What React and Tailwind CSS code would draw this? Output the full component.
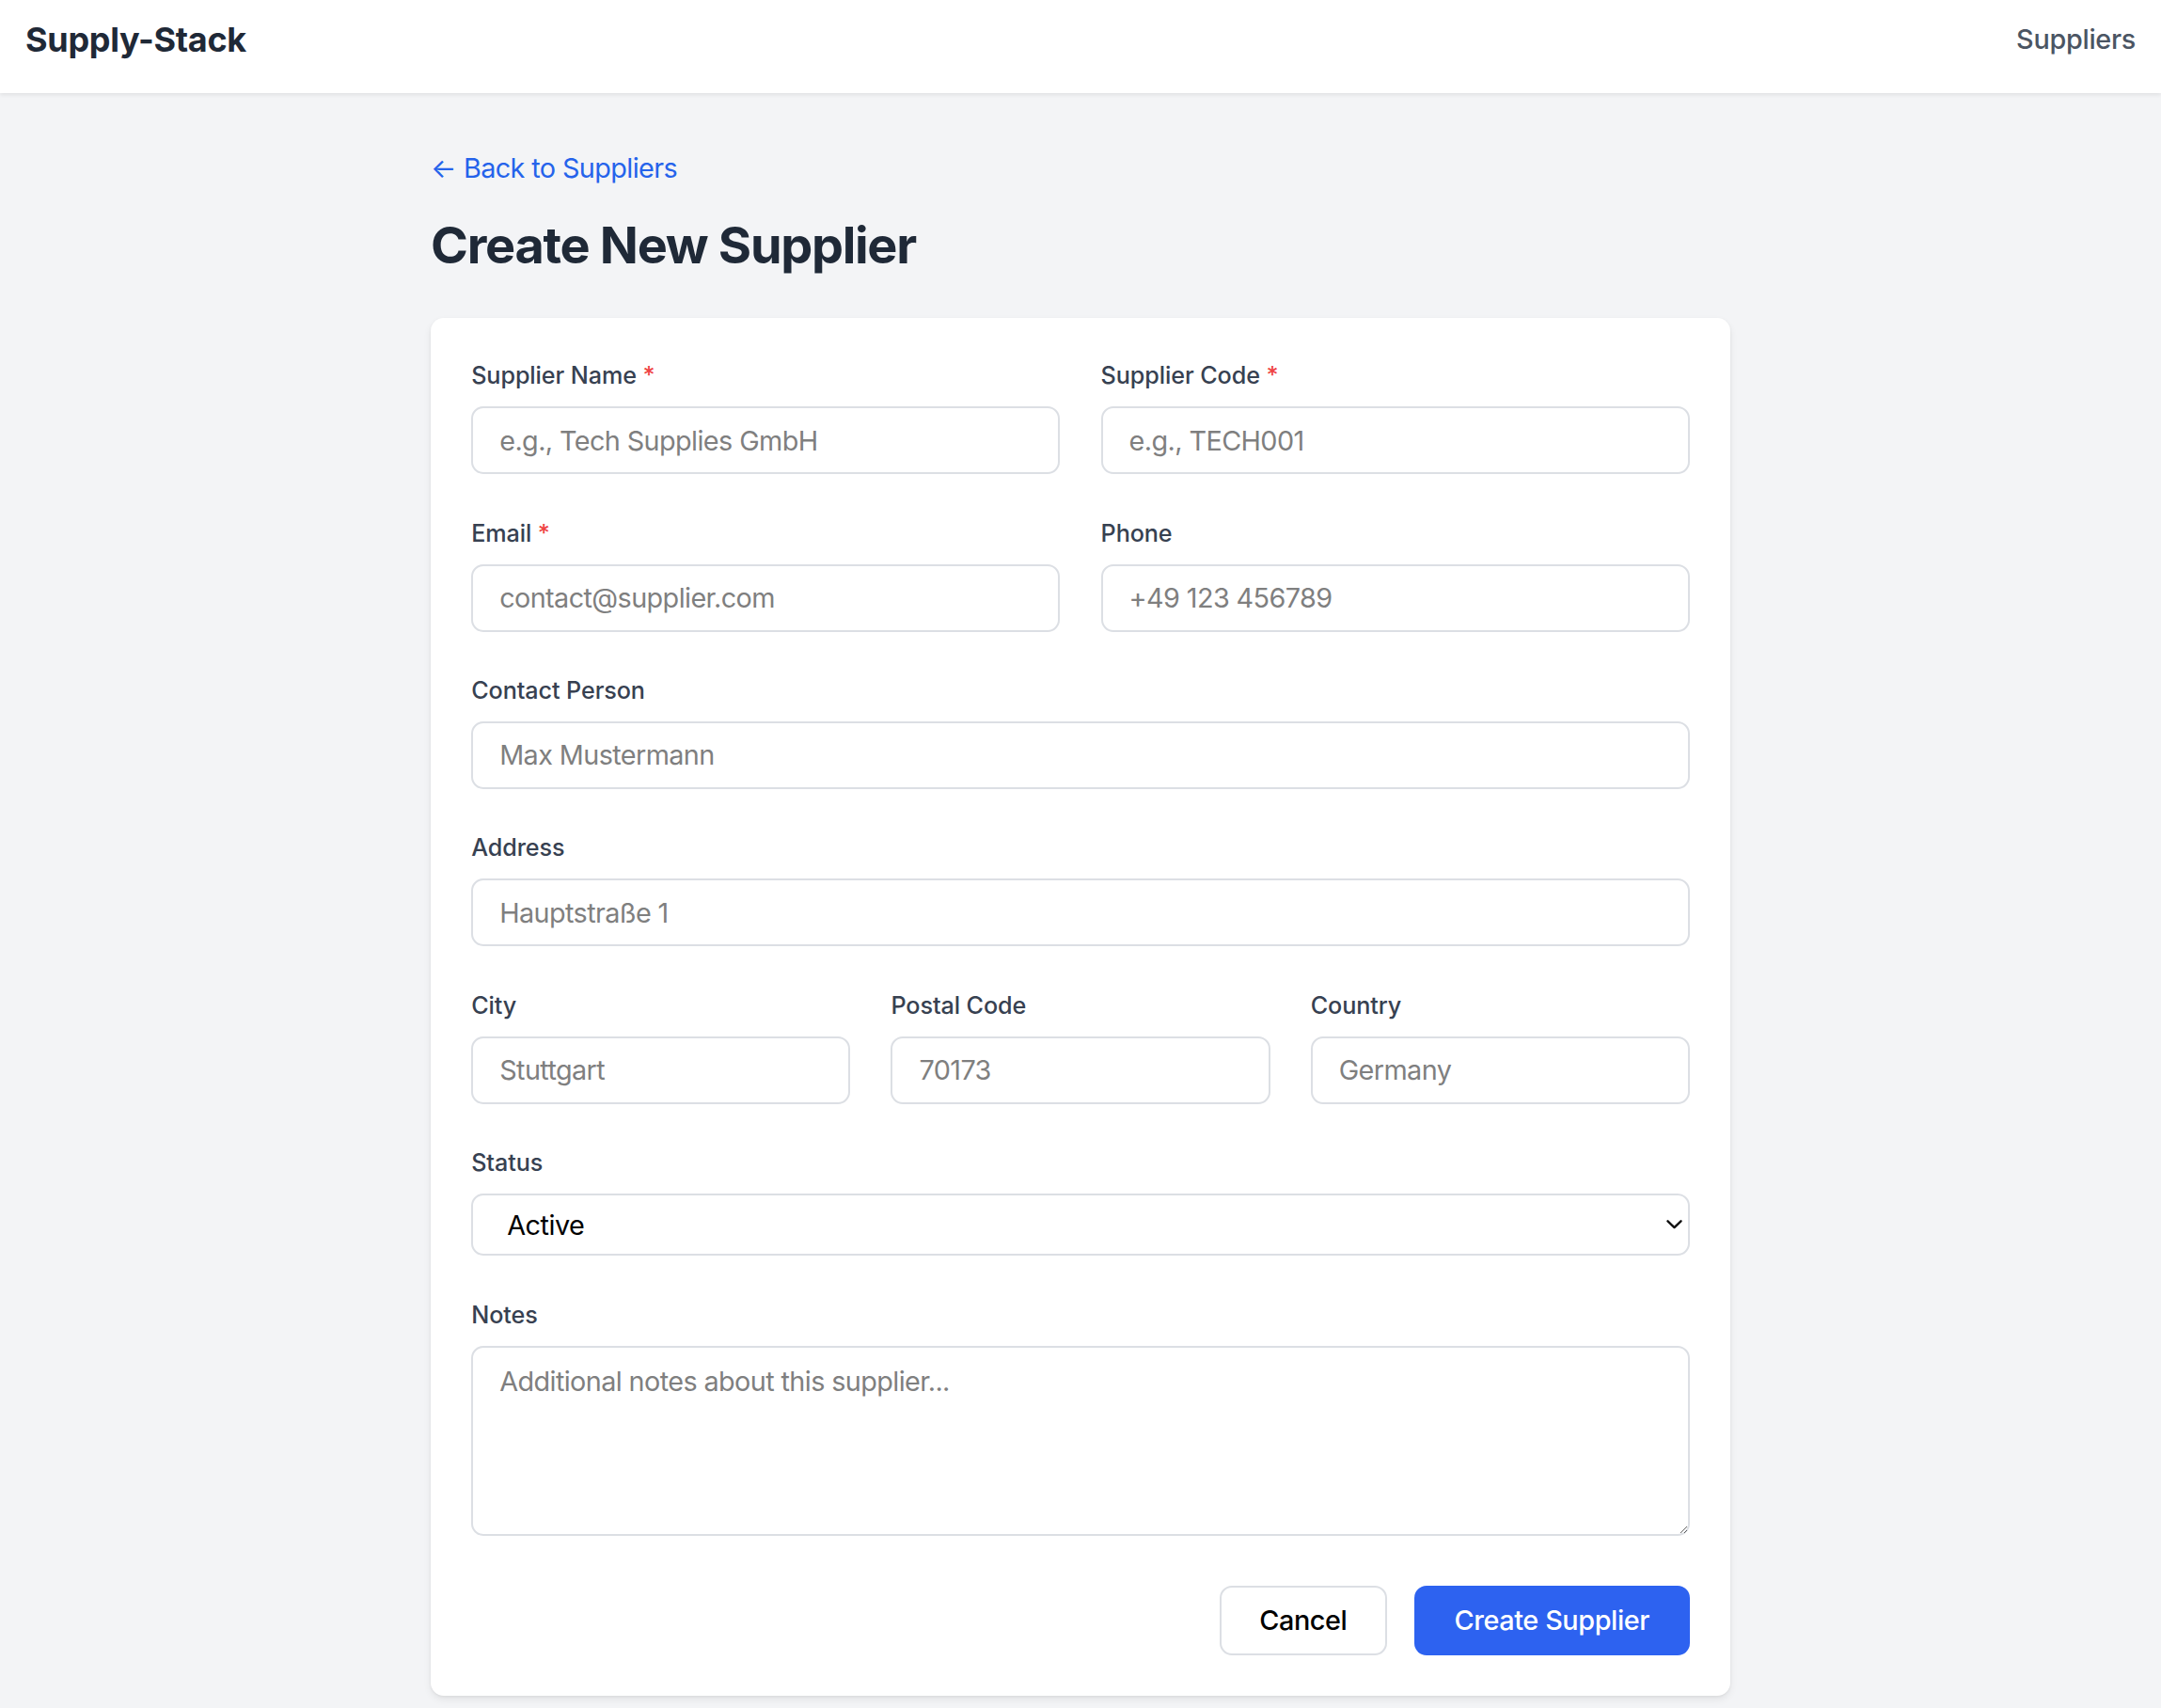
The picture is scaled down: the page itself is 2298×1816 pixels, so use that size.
import React from "react";

function Label({ children, req }) {
  return (
    <label className="block mb-[15px] text-[25.2px] leading-[36px] font-medium text-[#374151] tracking-[-0.1px]">
      {children}
      {req && <span className="text-[#ef4444]"> *</span>}
    </label>
  );
}

const inputCls =
  "block w-full h-[72px] rounded-[13px] border-2 border-[#dcdfe4] bg-white px-[28px] text-[28.8px] leading-[43.2px] tracking-[-0.6px] text-[#111827] placeholder:text-[#7f7f7f] outline-none";

function Field({ label, req, placeholder, type = "text" }) {
  return (
    <div>
      <Label req={req}>{label}</Label>
      <input type={type} className={inputCls} placeholder={placeholder} />
    </div>
  );
}

export default function App() {
  return (
    <div className="min-h-screen bg-[#f3f4f6] font-['Inter',sans-serif]">
      <header className="h-[99px] bg-white px-[27px] shadow-[0_2px_4px_rgba(0,0,0,0.08)]">
        <div className="h-[83px] flex items-center justify-between">
          <div className="text-[36px] leading-[50px] font-bold text-[#1f2937] tracking-[-0.3px]">Supply-Stack</div>
          <nav className="text-[28.8px] leading-[43px] font-medium text-[#4b5563] tracking-[-0.3px]">Suppliers</nav>
        </div>
      </header>

      <main className="w-[1382px] mx-auto pt-[58px] pb-[13px]">
        <a className="inline-flex items-center text-[28.8px] leading-[43.2px] tracking-[-0.6px] text-[#2563eb]" href="#">
          <span className="mr-[8px]">←</span>Back to Suppliers
        </a>
        <h1 className="mt-[29px] mb-[44px] text-[54px] leading-[64.8px] font-bold text-[#1f2937] tracking-[-1.3px]">
          Create New Supplier
        </h1>

        <div className="bg-white rounded-[14px] p-[43.2px] shadow-[0_4px_8px_rgba(0,0,0,0.07),0_1px_3px_rgba(0,0,0,0.06)]">
          <form className="flex flex-col gap-[44.4px]" onSubmit={(e) => e.preventDefault()}>
            <div className="grid grid-cols-2 gap-x-[43.2px]">
              <Field label="Supplier Name" req placeholder="e.g., Tech Supplies GmbH" />
              <Field label="Supplier Code" req placeholder="e.g., TECH001" />
            </div>
            <div className="grid grid-cols-2 gap-x-[43.2px]">
              <Field label="Email" req type="email" placeholder="contact@supplier.com" />
              <Field label="Phone" placeholder="+49 123 456789" />
            </div>
            <Field label="Contact Person" placeholder="Max Mustermann" />
            <Field label="Address" placeholder="Hauptstraße 1" />
            <div className="grid grid-cols-3 gap-x-[43.2px]">
              <Field label="City" placeholder="Stuttgart" />
              <Field label="Postal Code" placeholder="70173" />
              <Field label="Country" placeholder="Germany" />
            </div>
            <div>
              <Label>Status</Label>
              <div className="relative">
                <select className="appearance-none block w-full h-[66px] rounded-[13px] border-2 border-[#dcdfe4] bg-white pl-[36px] pr-[40px] text-[28.8px] tracking-[-0.5px] text-black outline-none">
                  <option>Active</option>
                  <option>Inactive</option>
                </select>
                <svg
                  className="pointer-events-none absolute right-[8px] top-1/2 -translate-y-1/2"
                  width="17"
                  height="11"
                  viewBox="0 0 17 11"
                  fill="none"
                >
                  <path d="M1.5 1.8L8.5 8.6L15.5 1.8" stroke="#111" strokeWidth="2.4" strokeLinecap="round" strokeLinejoin="round" />
                </svg>
              </div>
            </div>
            <div>
              <Label>Notes</Label>
              <textarea
                className="block w-full h-[202px] rounded-[13px] border-2 border-[#dcdfe4] bg-white px-[28px] py-[14.4px] text-[28.8px] leading-[43.2px] tracking-[-0.6px] text-[#111827] placeholder:text-[#7f7f7f] outline-none"
                placeholder="Additional notes about this supplier..."
              />
            </div>
            <div className="flex justify-end gap-[29px] pt-[9px]">
              <button type="button" className="h-[74px] w-[178px] rounded-[13px] border-2 border-[#dcdfe4] bg-white text-[28.8px] font-medium tracking-[-0.4px] text-black">
                Cancel
              </button>
              <button type="submit" className="h-[74px] w-[293px] rounded-[13px] bg-[#2d62f0] text-[28.8px] font-medium tracking-[-0.4px] text-white">
                Create Supplier
              </button>
            </div>
          </form>
        </div>
      </main>
    </div>
  );
}
